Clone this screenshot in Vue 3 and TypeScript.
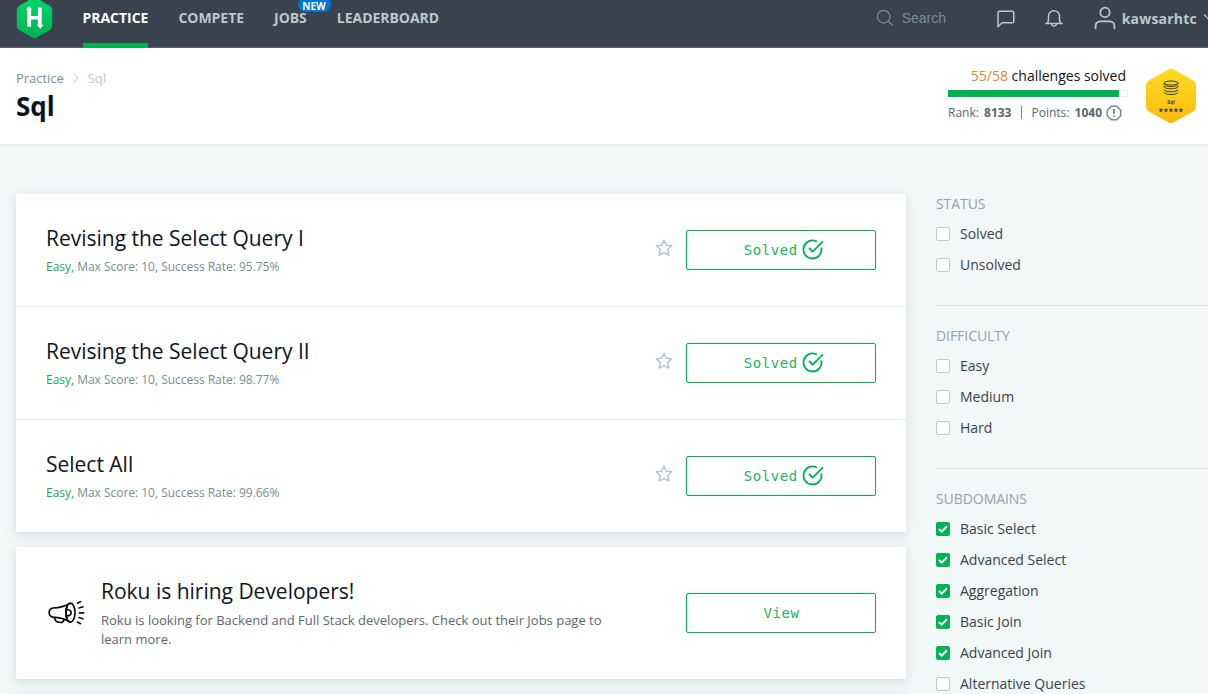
<script setup lang="ts">
interface Challenge {
  title: string
  rate: string
}
interface FilterOption {
  label: string
  checked: boolean
}
interface FilterGroup {
  name: string
  options: FilterOption[]
}

const navItems = [
  { label: 'PRACTICE', active: true, isNew: false },
  { label: 'COMPETE', active: false, isNew: false },
  { label: 'JOBS', active: false, isNew: true },
  { label: 'LEADERBOARD', active: false, isNew: false },
]

const challenges: Challenge[] = [
  { title: 'Revising the Select Query I', rate: '95.75%' },
  { title: 'Revising the Select Query II', rate: '98.77%' },
  { title: 'Select All', rate: '99.66%' },
]

const options = (labels: string[], checked = false): FilterOption[] =>
  labels.map((label) => ({ label, checked }))

const filters: FilterGroup[] = [
  { name: 'STATUS', options: options(['Solved', 'Unsolved']) },
  { name: 'DIFFICULTY', options: options(['Easy', 'Medium', 'Hard']) },
  {
    name: 'SUBDOMAINS',
    options: [
      ...options(['Basic Select', 'Advanced Select', 'Aggregation', 'Basic Join', 'Advanced Join'], true),
      ...options(['Alternative Queries']),
    ],
  },
]
</script>

<template>
  <div class="page">
    <nav class="nav">
      <svg class="logo" width="37" height="42" viewBox="0 0 38 42" preserveAspectRatio="none">
        <defs>
          <linearGradient id="logoFill" x1="0" y1="0" x2="0" y2="1">
            <stop offset="0" stop-color="#00d768" />
            <stop offset="1" stop-color="#00b051" />
          </linearGradient>
        </defs>
        <path d="M16.6 1.2Q19 0 21.4 1.2L34.6 8.8Q37 10.2 37.2 13V29Q37 31.8 34.6 33.2L21.4 40.6Q19 42 16.6 40.6L3.4 33.2Q1 31.8.8 29V13Q1 10.2 3.4 8.8Z" fill="url(#logoFill)" />
        <path d="M11.600 12.700h3.900v6.400h7v-8.600h3.900v17.200h1.900L25 32l-3.700-4.300h1.200v-5.300h-7v7.400h-3.900v-17.100H10.200L13.400 9l3.300 3.700z" fill="#fff" />
      </svg>
      <ul class="links">
        <li v-for="item in navItems" :key="item.label" :class="['link', { active: item.active }]">
          {{ item.label }}<span v-if="item.isNew" class="new">NEW</span>
        </li>
      </ul>
      <div class="search">
        <svg width="18" height="18" viewBox="0 0 18 18" fill="none" stroke="currentColor" stroke-width="1.3" stroke-linecap="round">
          <circle cx="7.7" cy="7.7" r="6.3" /><path d="M12.3 12.3l4 4" />
        </svg>
        <span>Search</span>
      </div>
      <svg class="chat" width="20" height="20" viewBox="0 0 20 20" fill="none" stroke="currentColor" stroke-width="1.5" stroke-linejoin="round">
        <path d="M3.6 2.2h12.6q1.6 0 1.6 1.6v8.4q0 1.6-1.6 1.6H6L2 17.8V3.8q0-1.6 1.6-1.6z" />
      </svg>
      <svg class="bell" width="20" height="20" viewBox="0 0 20 20" fill="none" stroke="currentColor" stroke-width="1.5" stroke-linecap="round" stroke-linejoin="round">
        <path d="M1.8 14.4h16.4M3.2 14.2q1.3-1.5 1.3-3.8V7.2a5.5 5.5 0 0 1 11 0v3.2q0 2.3 1.3 3.8" />
        <path d="M7.6 15.4a2.5 2.5 0 0 0 4.8 0" />
      </svg>
      <svg class="person" width="22" height="24" viewBox="0 0 22 24" fill="none" stroke="currentColor" stroke-width="1.8" stroke-linecap="round">
        <circle cx="11" cy="6.4" r="4.7" /><path d="M1.6 22.4v-2.5a4.6 4.6 0 0 1 4.6-4.6h9.6a4.6 4.6 0 0 1 4.6 4.6v2.5" />
      </svg>
      <span class="user">kawsarhtc</span>
      <svg class="caret" width="14" height="10" viewBox="0 0 14 10" fill="none" stroke="currentColor" stroke-width="1.2"><path d="M1 1.5l6 6 6-6" /></svg>
    </nav>

    <header class="head">
      <div class="heading">
        <div class="crumbs">
          <span>Practice</span>
          <svg width="8" height="12" viewBox="0 0 8 12" fill="none" stroke="#c3cfd0" stroke-width="1"><path d="M1.5 1.5L6 6l-4.5 4.5" /></svg>
          <span class="current">Sql</span>
        </div>
        <h1>Sql</h1>
      </div>
      <div class="progress">
        <div class="solved-count"><span>55/58</span> challenges solved</div>
        <div class="track"><div class="fill"></div></div>
        <div class="stats">
          <span class="rank">Rank: <b>8133</b></span><i></i><span class="points">Points: <b>1040</b></span>
          <svg width="16" height="16" viewBox="0 0 16 16" fill="none" stroke="#6d9396" stroke-width="1.6">
            <path d="M5.2 1.3h5.6l3.9 3.900v5.600l-3.900 3.900H5.200L1.300 10.800V5.200z" stroke-linejoin="round" />
            <path d="M8 4v5M8 10.500v1.500" stroke-width="1.900" />
          </svg>
        </div>
      </div>
      <svg class="badge" width="50" height="56" viewBox="0 0 50 56">
        <defs>
          <linearGradient id="badgeFill" x1="0" y1="0" x2="0" y2="1">
            <stop offset="0" stop-color="#ffdc22" />
            <stop offset="1" stop-color="#ffb90f" />
          </linearGradient>
        </defs>
        <path d="M22.500 1.300Q25 0 27.500 1.300L46.300 12Q50 14 50 18V38Q50 42 46.300 44L27.500 54.600Q25 56 22.500 54.600L3.700 44Q0 42 0 38V18Q0 14 3.700 12Z" fill="url(#badgeFill)" />
        <g fill="none" stroke="#39424e" stroke-width="1">
          <ellipse cx="25" cy="15" rx="7" ry="2" />
          <path d="M18 15v1.500c1 2.700 13 2.700 14 0V15M18 18.500c0 3 14 3 14 0M18 21.500c0 3 14 3 14 0M18 24.300c1 3 13 3 14 0M18 18v1M32 18v1" />
        </g>
        <text x="25" y="36.300" text-anchor="middle" class="badge-name">Sql</text>
        <g fill="#39424e">
          <path v-for="n in 5" :key="n" :transform="`translate(${10 + n * 5} 42)`" d="M0-2.300l.7 1.500 1.600.2L1.100.600l.3 1.600L0 1.400l-1.400.8.3-1.600L-2.300-.6l1.600-.2z" />
        </g>
      </svg>
    </header>

    <main class="body">
      <section class="list">
        <div class="stack">
          <article v-for="c in challenges" :key="c.title" class="challenge">
            <div class="info">
              <h2>{{ c.title }}</h2>
              <p class="meta"><em>Easy,</em> Max Score: 10, Success Rate: {{ c.rate }}</p>
            </div>
            <svg class="star" width="18" height="18" viewBox="0 0 18 18" fill="none" stroke="#b3c8cc" stroke-width="1.5" stroke-linejoin="round">
              <path d="M9 1.2l2.2 5 5.5.6-4.1 3.7 1.3 5.7L9 13.700l-4.900 2.500 1.300-5.700-4.100-3.700 5.500-.6z" />
            </svg>
            <button class="btn">
              Solved
              <svg width="22" height="22" viewBox="0 0 22 22" fill="none" stroke="#00af4f" stroke-width="1.800" stroke-linecap="round" stroke-linejoin="round">
                <path d="M14.200 2.300A9 9 0 1 0 19.400 9.200" /><path d="M7.500 9.500l3.200 3.200L20.400 2.800" />
              </svg>
            </button>
          </article>
        </div>

        <article class="promo">
          <svg class="horn" width="37" height="26" viewBox="0 0 37 26" fill="none" stroke="#0b0b0b" stroke-width="1.700" stroke-linecap="round" stroke-linejoin="round">
            <path d="M22 3.600C17 6.500 12 7.800 5 8 2.300 8.400 1.200 10.300 1.200 12.600s1.200 4 3.600 4.500C11 17.300 17 18.800 22 22" />
            <ellipse cx="22.400" cy="12.700" rx="4.600" ry="9.500" />
            <path d="M19.200 6c-1.300 4-1.300 9.400 0 13.400M19.200 9.500q3.900.3 3.900 3.200t-3.900 3.200" />
            <path d="M6.300 17.500l1 2.500q.6 1.500 2 1.800l3.400.7q1.600.2 2.500-1.300l1-1.700" />
            <path d="M29.500 3.200l3-1.500M31 8l4-1.200M31.500 12.900H35.500M31 17.500l4 1.200M29.500 22l3 1.700" />
          </svg>
          <div class="info">
            <h2>Roku is hiring Developers!</h2>
            <p class="blurb">Roku is looking for Backend and Full Stack developers. Check out their Jobs page to learn more.</p>
          </div>
          <button class="btn">View</button>
        </article>
        <div class="next-card"></div>
      </section>

      <aside class="filters">
        <section v-for="g in filters" :key="g.name" class="group">
          <h3>{{ g.name }}</h3>
          <label v-for="o in g.options" :key="o.label">
            <span :class="['box', { on: o.checked }]">
              <svg v-if="o.checked" width="10" height="8" viewBox="0 0 10 8" fill="none" stroke="#fff" stroke-width="2"><path d="M1 4l2.700 2.600L9 1.300" /></svg>
            </span>
            {{ o.label }}
          </label>
        </section>
      </aside>
    </main>
  </div>
</template>

<style>
body { margin: 0; overflow: hidden; }
</style>

<style scoped>
* { box-sizing: border-box; }
h1, h2, h3, p, ul { margin: 0; padding: 0; font-weight: 400; }
svg { display: block; flex: none; }
.page {
  height: 694px;
  overflow: hidden;
  background: #f2f7f8;
  color: #0e141e;
  font-family: "Open Sans", sans-serif;
  white-space: nowrap;
}
.nav {
  display: flex;
  align-items: center;
  height: 48px;
  padding-left: 16px;
  padding-bottom: 12px;
  background: #39424e;
  color: #b7c9cc;
}
.logo { margin-top: -1px; }
.links {
  display: flex;
  gap: 30px;
  margin-left: 29.5px;
  list-style: none;
  font-size: 14px;
  font-weight: 700;
  letter-spacing: -0.03px;
}
.link { position: relative; height: 60px; line-height: 60px; color: #b7c9cc; }
.link.active { color: #fff; }
.link.active::after {
  content: "";
  position: absolute;
  left: 0;
  right: 0;
  bottom: 0;
  height: 5px;
  background: #05b050;
}
.new {
  position: absolute;
  left: 23.5px;
  top: 9px;
  width: 33px;
  height: 15px;
  border-radius: 8px;
  background: #0076ce;
  color: #fff;
  font-size: 10px;
  line-height: 18px;
  letter-spacing: 0;
  text-align: center;
}
.search {
  display: flex;
  align-items: center;
  gap: 8px;
  width: 120px;
  margin-left: auto;
  color: #738f93;
  font: 14px "Liberation Sans", sans-serif;
}
.chat { margin-top: 2px; }
.bell { margin: 2px 0 0 28px; }
.person { margin-left: 30px; }
.user { margin: 1px 6px 0 6px; font-size: 14px; font-weight: 700; letter-spacing: 0.22px; }
.caret { margin-right: -9px; }

.head {
  display: flex;
  height: 96px;
  padding: 0 12px 0 16px;
  background: #fff;
  box-shadow: 0 1px 3px #e2ebeb;
}
.crumbs { display: flex; align-items: center; gap: 8px; height: 18px; margin-top: 21px; font-size: 13px; letter-spacing: -0.04px; color: #738f93; }
.current { color: #b7c9cc; }
h1 { margin-top: 2px; font-size: 26px; line-height: 34px; font-weight: 700; }
.progress { width: 180px; margin: 18px 18px 0 auto; }
.solved-count { height: 20px; padding-right: 2px; font-size: 14px; line-height: 20px; text-align: right; }
.solved-count span { color: #d68835; }
.track { height: 7px; margin-top: 4px; border: solid #eef0f2; border-width: 1px 1px 1px 0; background: #fff; }
.fill { width: 171px; height: 7px; margin-top: -1px; background: #00b250; }
.stats { display: flex; align-items: center; height: 20px; margin-top: 5px; font-size: 12px; color: #576871; }
.stats b { margin-left: 2px; font-weight: 700; }
.stats i { width: 1px; height: 13px; margin: 0 9px 0 10px; background: #738f93; }
.stats svg { margin: 1px 0 0 4px; }
.badge { margin-top: 19.5px; }
.badge-name { font: 700 5px "Open Sans", sans-serif; fill: #39424e; }

.body { display: flex; gap: 30px; padding: 50px 0 0 16px; }
.list { width: 890px; flex: none; }
.stack, .promo, .next-card { background: #fff; box-shadow: 0 2px 15px rgba(57, 66, 78, 0.07), 0 3px 7px rgba(57, 66, 78, 0.08); }
.challenge { display: flex; align-items: center; height: 113px; padding: 0 30px; border-bottom: 1px solid #e3eaea; }
.challenge:last-child { height: 112px; border-bottom: 0; }
.info { flex: 1; }
h2 { margin-top: -1px; font-size: 21px; line-height: 28px; letter-spacing: -0.01px; }
.meta { margin-top: 6px; font-size: 12px; line-height: 18px; letter-spacing: -0.02px; color: #738f93; }
.meta em { color: #1ba94c; font-style: normal; }
.star { margin: -3.5px 13.5px 0 0; }
.btn {
  display: flex;
  align-items: center;
  justify-content: center;
  gap: 4.5px;
  width: 190px;
  height: 40px;
  padding: 0 0 0 6px;
  border: 1px solid #00af4f;
  border-radius: 2px;
  background: #fff;
  color: #1bb55c;
  font: 14px "DejaVu Sans Mono", monospace;
  letter-spacing: 0.57px;
}
.promo { display: flex; align-items: center; height: 132px; margin-top: 15px; padding: 0 30px; }
.promo .btn { padding: 0 0 0 1px; }
.horn { margin-left: 2px; }
.promo .info { margin-left: 16px; }
.blurb { width: 530px; margin: 6px 0 -1px; font-size: 13px; line-height: 19px; color: #576871; white-space: normal; }
.next-card { height: 40px; margin-top: 15px; }

.filters { flex: 1; font-size: 14px; line-height: 20px; color: #39424e; }
.group { display: flex; flex-direction: column; padding-bottom: 30px; margin-bottom: 20px; border-bottom: 1px solid #dde3e4; }
.group h3 { margin-bottom: 10px; font-size: 14px; letter-spacing: -0.06px; color: #989fb3; }
.group label { display: flex; align-items: center; gap: 10px; }
.group label + label { margin-top: 11px; }
.box { display: flex; align-items: center; justify-content: center; width: 14px; height: 14px; border: 1px solid #c2c7d0; border-radius: 2px; background: #fff; }
.box.on { border-color: #00b250; background: #00b250; }
</style>
